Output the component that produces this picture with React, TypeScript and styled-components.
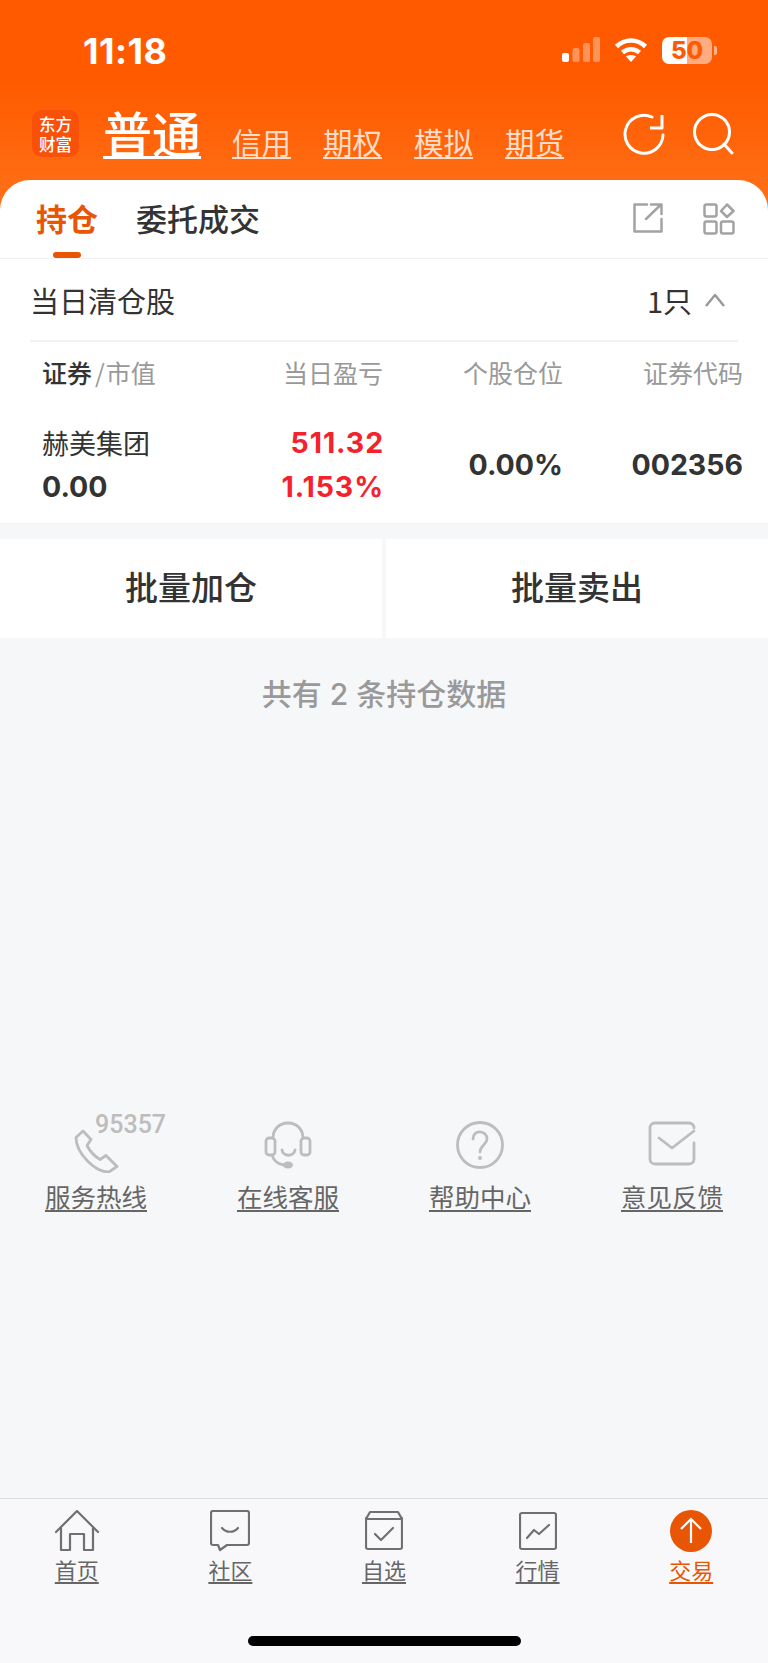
import styled, { createGlobalStyle } from "styled-components";

const GlobalStyle = createGlobalStyle`
  html, body { margin: 0; padding: 0; background: #f6f7f9; }
  body { font-family: "Inter", "Noto Sans CJK SC", sans-serif; }
`;

const cjk = `"Noto Sans CJK SC", "Noto Sans", sans-serif`;
const latin = `"Inter", "Noto Sans CJK SC", sans-serif`;

const Page = styled.div`
  width: 768px;
  height: 1663px;
  display: flex;
  flex-direction: column;
  background: #f6f7f9;
  overflow: hidden;
`;

const Top = styled.div`
  background: linear-gradient(#ff5a00 0, #ff5a00 80px, #ff7219 215px);
`;

const StatusBar = styled.div`
  height: 100px;
  display: flex;
  align-items: flex-start;
  justify-content: space-between;
  padding: 31px 56px 0 83px;
  box-sizing: border-box;
`;

const Clock = styled.div`
  font: 700 36px/40px ${latin};
  color: #fff;
  letter-spacing: 0.5px;
`;

const StatusIcons = styled.div`
  display: flex;
  align-items: center;
  gap: 14px;
  height: 44px;
  margin-top: -3px;
`;

const Battery = styled.div`
  position: relative;
  width: 50px;
  height: 27px;
  border-radius: 7px;
  background: linear-gradient(90deg, #fff 0, #fff 50%, rgba(255, 255, 255, 0.5) 50%);
  color: #ff5a00;
  font: 800 24px/27px ${latin};
  text-align: center;

  &::after {
    content: "";
    position: absolute;
    right: -5px;
    top: 9px;
    width: 3px;
    height: 9px;
    border-radius: 0 2px 2px 0;
    background: rgba(255, 255, 255, 0.55);
  }
`;

const NavBar = styled.div`
  height: 80px;
  display: flex;
  align-items: flex-start;
  padding: 10px 34px 0 32px;
  box-sizing: border-box;
`;

const Logo = styled.div`
  width: 47px;
  height: 47px;
  flex: none;
  border-radius: 10px;
  background: #f9500a;
  color: #fff;
  font: 500 16.5px/20px ${cjk};
  display: flex;
  align-items: center;
  justify-content: center;
  text-align: center;
  margin-right: 24px;
`;

const NavLinks = styled.div`
  display: flex;
  align-items: flex-end;
  height: 49px;
  flex: 1;
`;

const NavLink = styled.a<{ $active?: boolean }>`
  color: ${(p) => (p.$active ? "#fff" : "rgba(255, 255, 255, 0.78)")};
  font: ${(p) => (p.$active ? "500 49px/54px" : "400 29.5px/35px")} ${cjk};
  text-decoration: underline;
  text-decoration-thickness: ${(p) => (p.$active ? "3px" : "2px")};
  text-underline-offset: 3px;
  margin-right: ${(p) => (p.$active ? "31px" : "32px")};
  white-space: nowrap;
`;

const NavIcons = styled.div`
  display: flex;
  gap: 27px;
  align-items: center;
  height: 44px;
  margin-top: 2px;
`;

const TabCard = styled.div`
  height: 78px;
  background: #fff;
  border-radius: 30px 30px 0 0;
  border-bottom: 1px solid #f1f2f4;
  display: flex;
  align-items: flex-start;
  padding: 0 33px 0 36px;
`;

const Tab = styled.div<{ $active?: boolean }>`
  position: relative;
  height: 78px;
  margin-right: 38px;
  font: ${(p) => (p.$active ? "700" : "500")} 31px/75px ${cjk};
  color: ${(p) => (p.$active ? "#e85505" : "#333")};

  ${(p) =>
    p.$active &&
    `&::after {
      content: "";
      position: absolute;
      left: 17px;
      bottom: 0;
      width: 28px;
      height: 6px;
      border-radius: 3px;
      background: #e85505;
    }`}
`;

const TabActions = styled.div`
  margin-left: auto;
  display: flex;
  gap: 40px;
  padding-top: 23px;
`;

const Section = styled.section`
  background: #fff;
  border-bottom: 1px solid #f1f2f4;
  height: 265px;
  box-sizing: border-box;
`;

const SectionHead = styled.div`
  margin: 0 30px;
  height: 83px;
  border-bottom: 2px solid #f1f2f4;
  box-sizing: border-box;
  display: flex;
  align-items: center;
  justify-content: space-between;
  padding: 0 11px 0 0;
  font: 400 29px/40px ${cjk};
  color: #333;
`;

const Count = styled.div`
  display: flex;
  align-items: center;
  gap: 11px;
`;

const Row = styled.div<{ $head?: boolean }>`
  display: grid;
  grid-template-columns: 161px 180px 180px 180px;
  padding: ${(p) => (p.$head ? "0 25px 2px 42px" : "2px 25px 0 42px")};
  align-items: center;
  box-sizing: border-box;
  height: ${(p) => (p.$head ? "62px" : "120px")};
`;

const HeadCell = styled.div<{ $left?: boolean }>`
  font: 400 25px/34px ${cjk};
  color: #999;
  text-align: ${(p) => (p.$left ? "left" : "right")};
  white-space: nowrap;
`;

const Strong = styled.span`
  color: #333;
  font-weight: 500;
`;

const Slash = styled.span`
  margin: 0 1px 0 3px;
`;

const Cell = styled.div<{ $left?: boolean }>`
  display: flex;
  flex-direction: column;
  gap: 8px;
  align-items: ${(p) => (p.$left ? "flex-start" : "flex-end")};
`;

const StockName = styled.div`
  font: 400 27px/36px ${cjk};
  color: #333;
`;

const Num = styled.div<{ $red?: boolean }>`
  font: 700 28.5px/36px ${latin};
  letter-spacing: ${(p) => (p.$red ? "0.9px" : "0")};
  margin-right: ${(p) => (p.$red ? "-1px" : "0")};
  color: ${(p) => (p.$red ? "#f5222d" : "#333")};
`;

const Batch = styled.div`
  margin-top: 15px;
  height: 99px;
  display: flex;
  gap: 4px;
`;

const BatchButton = styled.div`
  flex: 1;
  background: #fff;
  display: flex;
  align-items: center;
  justify-content: center;
  padding-bottom: 6px;
  box-sizing: border-box;
  font: 500 33px/40px ${cjk};
  color: #333;
`;

const Summary = styled.div`
  margin-top: 33px;
  text-align: center;
  font: 500 30px/46px ${latin};
  color: #999;
`;

const Spacer = styled.div`
  flex: 1;
`;

const Help = styled.div`
  display: grid;
  grid-template-columns: repeat(4, 192px);
  justify-content: center;
  margin-bottom: 284px;
`;

const HelpItem = styled.div`
  position: relative;
  display: flex;
  flex-direction: column;
  align-items: center;
  gap: 5px;
`;

const HelpLabel = styled.span`
  font: 400 25.5px/36px ${cjk};
  color: #666;
  text-decoration: underline;
  text-underline-offset: 3px;
  text-decoration-thickness: 2px;
`;

const HotlineNumber = styled.span`
  position: absolute;
  left: 95px;
  top: -10px;
  font: 500 25px/28px "Roboto", sans-serif;
  color: #bdbdbd;
`;

const TabBar = styled.nav`
  height: 165px;
  flex: none;
  box-sizing: border-box;
  background: #f8f8fa;
  border-top: 1px solid #dedfe1;
  position: relative;
  display: grid;
  grid-template-columns: repeat(5, 153.6px);
`;

const BarItem = styled.div`
  display: flex;
  flex-direction: column;
  align-items: center;
  padding-top: 11px;
`;

const BarLabel = styled.span<{ $active?: boolean }>`
  font: 400 22px/30px ${cjk};
  margin-top: 2px;
  color: ${(p) => (p.$active ? "#e85505" : "#666")};
  text-decoration: underline;
  text-underline-offset: 3px;
`;

const HomeIndicator = styled.div`
  position: absolute;
  left: 248px;
  bottom: 17px;
  width: 273px;
  height: 10px;
  border-radius: 5px;
  background: #000;
`;

const stroke = { fill: "none", strokeLinecap: "round", strokeLinejoin: "round" } as const;

const SignalIcon = () => (
  <svg width="38" height="26" viewBox="0 0 38 26">
    <rect x="0" y="16" width="7" height="9" rx="2" fill="#fff" />
    <rect x="10.500" y="11" width="7" height="14" rx="2" fill="#fff" opacity="0.35" />
    <rect x="21" y="6" width="7" height="19" rx="2" fill="#fff" opacity="0.35" />
    <rect x="31" y="0" width="7" height="25" rx="2" fill="#fff" opacity="0.35" />
  </svg>
);

const WifiIcon = () => (
  <svg width="34" height="26" viewBox="0 0 34 26" {...stroke} stroke="#fff" strokeWidth="4.500">
    <path d="M2.500 9.500C11 1.500 23 1.500 31.500 9.500" strokeLinecap="butt" />
    <path d="M8.500 15.500C13.500 11 20.500 11 25.500 15.500" strokeLinecap="butt" />
    <path d="M17 25l-5-5.500c3-2 7-2 10 0z" fill="#fff" stroke="none" />
  </svg>
);

const RefreshIcon = () => (
  <svg width="42" height="42" viewBox="0 0 42 42" {...stroke} stroke="#fff" strokeWidth="3">
    <path d="M40 22A19 19 0 1 1 29 4" />
    <path d="M39 2V15H27" strokeLinecap="butt" />
  </svg>
);

const SearchIcon = () => (
  <svg width="42" height="42" viewBox="0 0 42 42" {...stroke} stroke="#fff" strokeWidth="3">
    <circle cx="20" cy="19" r="17.500" />
    <path d="M32 31L40 40" />
  </svg>
);

const ShareIcon = () => (
  <svg width="30" height="30" viewBox="0 0 30 30" {...stroke} stroke="#a3a3a3" strokeWidth="2.500">
    <path d="M14 1.500H1.500V28.500H28.500V16" />
    <path d="M13 16L28 1.500M18 1.500H28.500V11" />
  </svg>
);

const AppsIcon = () => (
  <svg width="32" height="32" viewBox="0 0 32 32" {...stroke} stroke="#a3a3a3" strokeWidth="2.500">
    <rect x="1.500" y="1.500" width="12" height="12" rx="2" />
    <rect x="1.500" y="18.500" width="12" height="12" rx="2" />
    <rect x="18" y="18.500" width="12.500" height="12" rx="2" />
    <path d="M24 1.500L30.500 8L24 14L18 8Z" />
  </svg>
);

const ChevronIcon = () => (
  <svg width="24" height="16" viewBox="0 0 24 16" {...stroke} stroke="#999" strokeWidth="2.500">
    <path d="M3 14L12 3L21 14" strokeLinecap="butt" />
  </svg>
);

const PhoneIcon = () => (
  <svg width="48" height="52" viewBox="0 0 48 52" {...stroke} stroke="#bdbdbd" strokeWidth="2.800">
    <path d="M11 10L4 16.500C4 25.500 9 33.500 16 40.500C23 47.500 30 51 37 51L45 45.500L34 34.500L28 38.500C23 35.500 18 30.500 15 24.500L19 18.500Z" />
  </svg>
);

const HeadsetIcon = () => (
  <svg width="48" height="52" viewBox="0 0 48 52" {...stroke} stroke="#bdbdbd" strokeWidth="2.800">
    <path d="M9 17C9 8 15.500 2 24 2C32.500 2 39 8 39 17" />
    <rect x="2" y="17" width="9" height="17" rx="3" />
    <rect x="37" y="17" width="9" height="17" rx="3" />
    <path d="M18 29C19 36 30 36 31 29" />
    <path d="M8 34C10 40 13 43 20 44" />
    <ellipse cx="24" cy="44" rx="5" ry="3.500" fill="#bdbdbd" stroke="none" />
  </svg>
);

const QuestionIcon = () => (
  <svg width="48" height="52" viewBox="0 0 48 52" {...stroke} stroke="#bdbdbd" strokeWidth="2.800">
    <circle cx="24" cy="24" r="22.500" />
    <path d="M17 18C17 8 31 9 31 18C31 24 24 24 24 31" />
    <circle cx="24" cy="37" r="2" fill="#bdbdbd" stroke="none" />
  </svg>
);

const MailIcon = () => (
  <svg width="48" height="52" viewBox="0 0 48 52" {...stroke} stroke="#bdbdbd" strokeWidth="2.800">
    <path d="M46 22V38C46 41 44 43 41 43H7C4 43 2 41 2 38V7C2 4 4 2 7 2H41C44 2 46 4 46 7" />
    <path d="M11 17L24 27L46 10" />
  </svg>
);

const HomeIcon = () => (
  <svg width="44" height="42" viewBox="0 0 44 42" {...stroke} stroke="#707070" strokeWidth="2.200">
    <path d="M1 22L22 1L43 22" />
    <path d="M6 18V40H15V24H29V40H38V18" />
  </svg>
);

const CommunityIcon = () => (
  <svg width="40" height="42" viewBox="0 0 40 42" {...stroke} stroke="#707070" strokeWidth="2.200">
    <path d="M3 1H37C38 1 39 2 39 3V33C39 34 38 35 37 35H17L10 40L8 35H3C2 35 1 34 1 33V3C1 2 2 1 3 1Z" />
    <path d="M12 18C16 23 24 23 28 18" />
  </svg>
);

const WatchIcon = () => (
  <svg width="38" height="42" viewBox="0 0 38 42" {...stroke} stroke="#707070" strokeWidth="2.200">
    <path d="M1 8V37C1 38 2 39 3 39H35C36 39 37 38 37 37V8" />
    <path d="M1 9L5 2H33L37 9H1Z" />
    <path d="M10 24L16 30L28 18" />
  </svg>
);

const MarketIcon = () => (
  <svg width="38" height="42" viewBox="0 0 38 42" {...stroke} stroke="#707070" strokeWidth="2.200">
    <rect x="1" y="3" width="36" height="36" rx="2" />
    <path d="M8 28L15 20L20 24L30 15" />
  </svg>
);

const TradeIcon = () => (
  <svg width="42" height="42" viewBox="0 0 42 42">
    <circle cx="21" cy="21" r="21" fill="#e85505" />
    <path d="M21 33V9M11 19L21 9L31 19" fill="none" stroke="#fff" strokeWidth="2.200" />
  </svg>
);

const navLinks = ["信用", "期权", "模拟", "期货"];

const helpItems = [
  { label: "服务热线", icon: <PhoneIcon />, hotline: "95357" },
  { label: "在线客服", icon: <HeadsetIcon /> },
  { label: "帮助中心", icon: <QuestionIcon /> },
  { label: "意见反馈", icon: <MailIcon /> },
];

const barItems = [
  { label: "首页", icon: <HomeIcon /> },
  { label: "社区", icon: <CommunityIcon /> },
  { label: "自选", icon: <WatchIcon /> },
  { label: "行情", icon: <MarketIcon /> },
  { label: "交易", icon: <TradeIcon />, active: true },
];

export default function App() {
  return (
    <Page>
      <GlobalStyle />
      <Top>
        <StatusBar>
          <Clock>11:18</Clock>
          <StatusIcons>
            <SignalIcon />
            <WifiIcon />
            <Battery>50</Battery>
          </StatusIcons>
        </StatusBar>
        <NavBar>
          <Logo>
            东方
            <br />
            财富
          </Logo>
          <NavLinks>
            <NavLink $active>普通</NavLink>
            {navLinks.map((link) => (
              <NavLink key={link}>{link}</NavLink>
            ))}
          </NavLinks>
          <NavIcons>
            <RefreshIcon />
            <SearchIcon />
          </NavIcons>
        </NavBar>
        <TabCard>
          <Tab $active>持仓</Tab>
          <Tab>委托成交</Tab>
          <TabActions>
            <ShareIcon />
            <AppsIcon />
          </TabActions>
        </TabCard>
      </Top>

      <Section>
        <SectionHead>
          <span>当日清仓股</span>
          <Count>
            <span>1只</span>
            <ChevronIcon />
          </Count>
        </SectionHead>
        <Row $head>
          <HeadCell $left>
            <Strong>证券</Strong>
            <Slash>/</Slash>市值
          </HeadCell>
          <HeadCell>当日盈亏</HeadCell>
          <HeadCell>个股仓位</HeadCell>
          <HeadCell>证券代码</HeadCell>
        </Row>
        <Row>
          <Cell $left>
            <StockName>赫美集团</StockName>
            <Num>0.00</Num>
          </Cell>
          <Cell>
            <Num $red>511.32</Num>
            <Num $red>1.153%</Num>
          </Cell>
          <Cell>
            <Num>0.00%</Num>
          </Cell>
          <Cell>
            <Num>002356</Num>
          </Cell>
        </Row>
      </Section>

      <Batch>
        <BatchButton>批量加仓</BatchButton>
        <BatchButton>批量卖出</BatchButton>
      </Batch>

      <Summary>共有 2 条持仓数据</Summary>

      <Spacer />

      <Help>
        {helpItems.map((item) => (
          <HelpItem key={item.label}>
            {item.icon}
            {item.hotline && <HotlineNumber>{item.hotline}</HotlineNumber>}
            <HelpLabel>{item.label}</HelpLabel>
          </HelpItem>
        ))}
      </Help>

      <TabBar>
        {barItems.map((item) => (
          <BarItem key={item.label}>
            {item.icon}
            <BarLabel $active={item.active}>{item.label}</BarLabel>
          </BarItem>
        ))}
        <HomeIndicator />
      </TabBar>
    </Page>
  );
}
